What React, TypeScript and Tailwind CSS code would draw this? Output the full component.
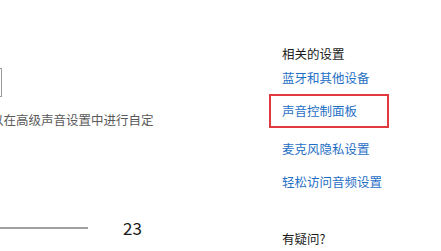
const FONT = { fontFamily: '"Noto Sans CJK SC", "Noto Sans", sans-serif' };

const links = ['蓝牙和其他设备', '声音控制面板', '麦克风隐私设置', '轻松访问音频设置'];

export default function App() {
  return (
    <div className="flex h-[251px] w-[441px] overflow-hidden bg-white" style={FONT}>
      {/* left: sound output column, cut off at the edge */}
      <div className="w-[230px] shrink-0 overflow-hidden pt-[68px]">
        <div className="ml-[-198px] h-[29px] w-[200px] border border-[#9a9a9a]" />
        <p className="mt-[13px] ml-[-9px] h-[20px] whitespace-nowrap text-[12.5px] leading-[20px] text-[#5a5a5a]">
          以在高级声音设置中进行自定
        </p>
        <div className="mt-[88px] flex h-[20px] items-center">
          <div className="h-[2px] w-[88px] bg-[#a0a0a0]" />
          <span className="ml-[35px] text-[17px] leading-[20px] text-[#1a1a1a]">23</span>
        </div>
      </div>

      {/* right: related settings */}
      <div className="ml-[52px] flex flex-col pt-[44px]">
        <h3 className="h-[20px] text-[12.5px] leading-[20px] text-[#1a1a1a]">相关的设置</h3>
        <a className="mt-[4px] h-[20px] text-[12.5px] leading-[20px] text-[#1f6fc5]">{links[0]}</a>
        <div className="mt-[6px] ml-[-13px] flex h-[34px] w-[120px] items-center border-2 border-[#e0393e] pl-[11px]">
          <a className="text-[12.5px] leading-[20px] text-[#1f6fc5]">{links[1]}</a>
        </div>
        <a className="mt-[11px] h-[20px] text-[12.5px] leading-[20px] text-[#1f6fc5]">{links[2]}</a>
        <a className="mt-[13px] h-[20px] text-[12.5px] leading-[20px] text-[#1f6fc5]">{links[3]}</a>
        <h3 className="mt-[37px] h-[20px] text-[12.5px] leading-[20px] text-[#1a1a1a]">有疑问?</h3>
      </div>
    </div>
  );
}
